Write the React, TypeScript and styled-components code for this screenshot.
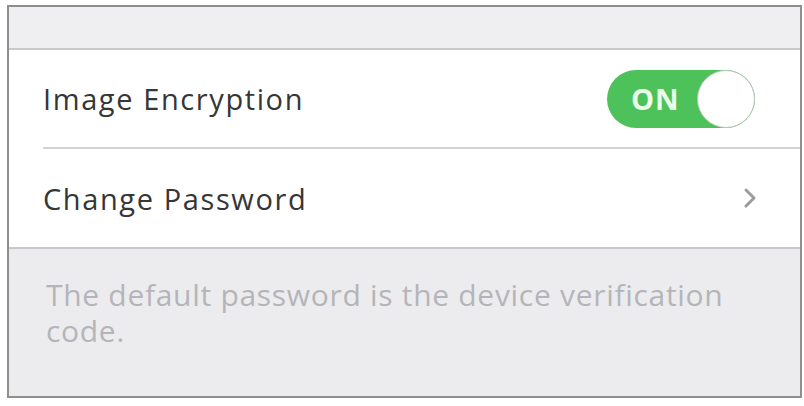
import React from "react";
import styled, { createGlobalStyle } from "styled-components";

const Global = createGlobalStyle`
  html, body { margin: 0; padding: 0; background: #ffffff; }
  body { font-family: "Open Sans", "DejaVu Sans", sans-serif; }
`;

const Frame = styled.div`
  box-sizing: border-box;
  margin: 5px 0 0 7px;
  width: 795px;
  height: 393px;
  border: 2px solid #8e8e8e;
  background: #ececef;
  display: flex;
  flex-direction: column;
`;

const TopBand = styled.div`
  height: 41px;
  background: #efeff2;
`;

const Group = styled.div`
  background: #ffffff;
  border-top: 2px solid #c9c9cc;
  border-bottom: 2px solid #c9c9cc;
  display: flex;
  flex-direction: column;
`;

const Row = styled.div<{ $h: number }>`
  height: ${(p) => p.$h}px;
  display: flex;
  align-items: center;
  justify-content: space-between;
  padding: 0 43px 0 34px;
`;

const Label = styled.span`
  font-size: 29px;
  color: #363636;
  letter-spacing: 1.6px;
`;

const Divider = styled.div`
  height: 2px;
  margin-left: 34px;
  background: #d3d3d6;
`;

const Toggle = styled.div`
  width: 148px;
  height: 58px;
  border-radius: 29px;
  background: #4dc25a;
  display: flex;
  align-items: center;
  justify-content: space-between;
  padding: 0 0 0 24px;
  box-sizing: border-box;
  margin-right: 2px;
`;

const ToggleText = styled.span`
  font-family: "Open Sans", "DejaVu Sans", sans-serif;
  font-weight: 700;
  font-size: 29px;
  color: #eaffea;
  letter-spacing: 1px;
`;

const Knob = styled.div`
  width: 56px;
  height: 56px;
  border-radius: 50%;
  background: #ffffff;
  border: 1px solid #b9c6b9;
`;

const Footer = styled.div`
  flex: 1;
  background: #ececef;
  padding: 28px 50px 0 37px;
`;

const Note = styled.p`
  margin: 0;
  font-size: 30px;
  line-height: 36px;
  color: #b5b5b9;
  letter-spacing: 0.7px;
`;

export default function App() {
  return (
    <>
      <Global />
      <Frame>
        <TopBand />
        <Group>
          <Row $h={97}>
            <Label>Image Encryption</Label>
            <Toggle>
              <ToggleText>ON</ToggleText>
              <Knob />
            </Toggle>
          </Row>
          <Divider />
          <Row $h={98}>
            <Label>Change Password</Label>
            <svg width="14" height="22" viewBox="0 0 14 22" fill="none">
              <path d="M3 3 L11 11 L3 19" stroke="#9c9c9c" strokeWidth="3" strokeLinecap="round" strokeLinejoin="round" />
            </svg>
          </Row>
        </Group>
        <Footer>
          <Note>The default password is the device verification code.</Note>
        </Footer>
      </Frame>
    </>
  );
}
